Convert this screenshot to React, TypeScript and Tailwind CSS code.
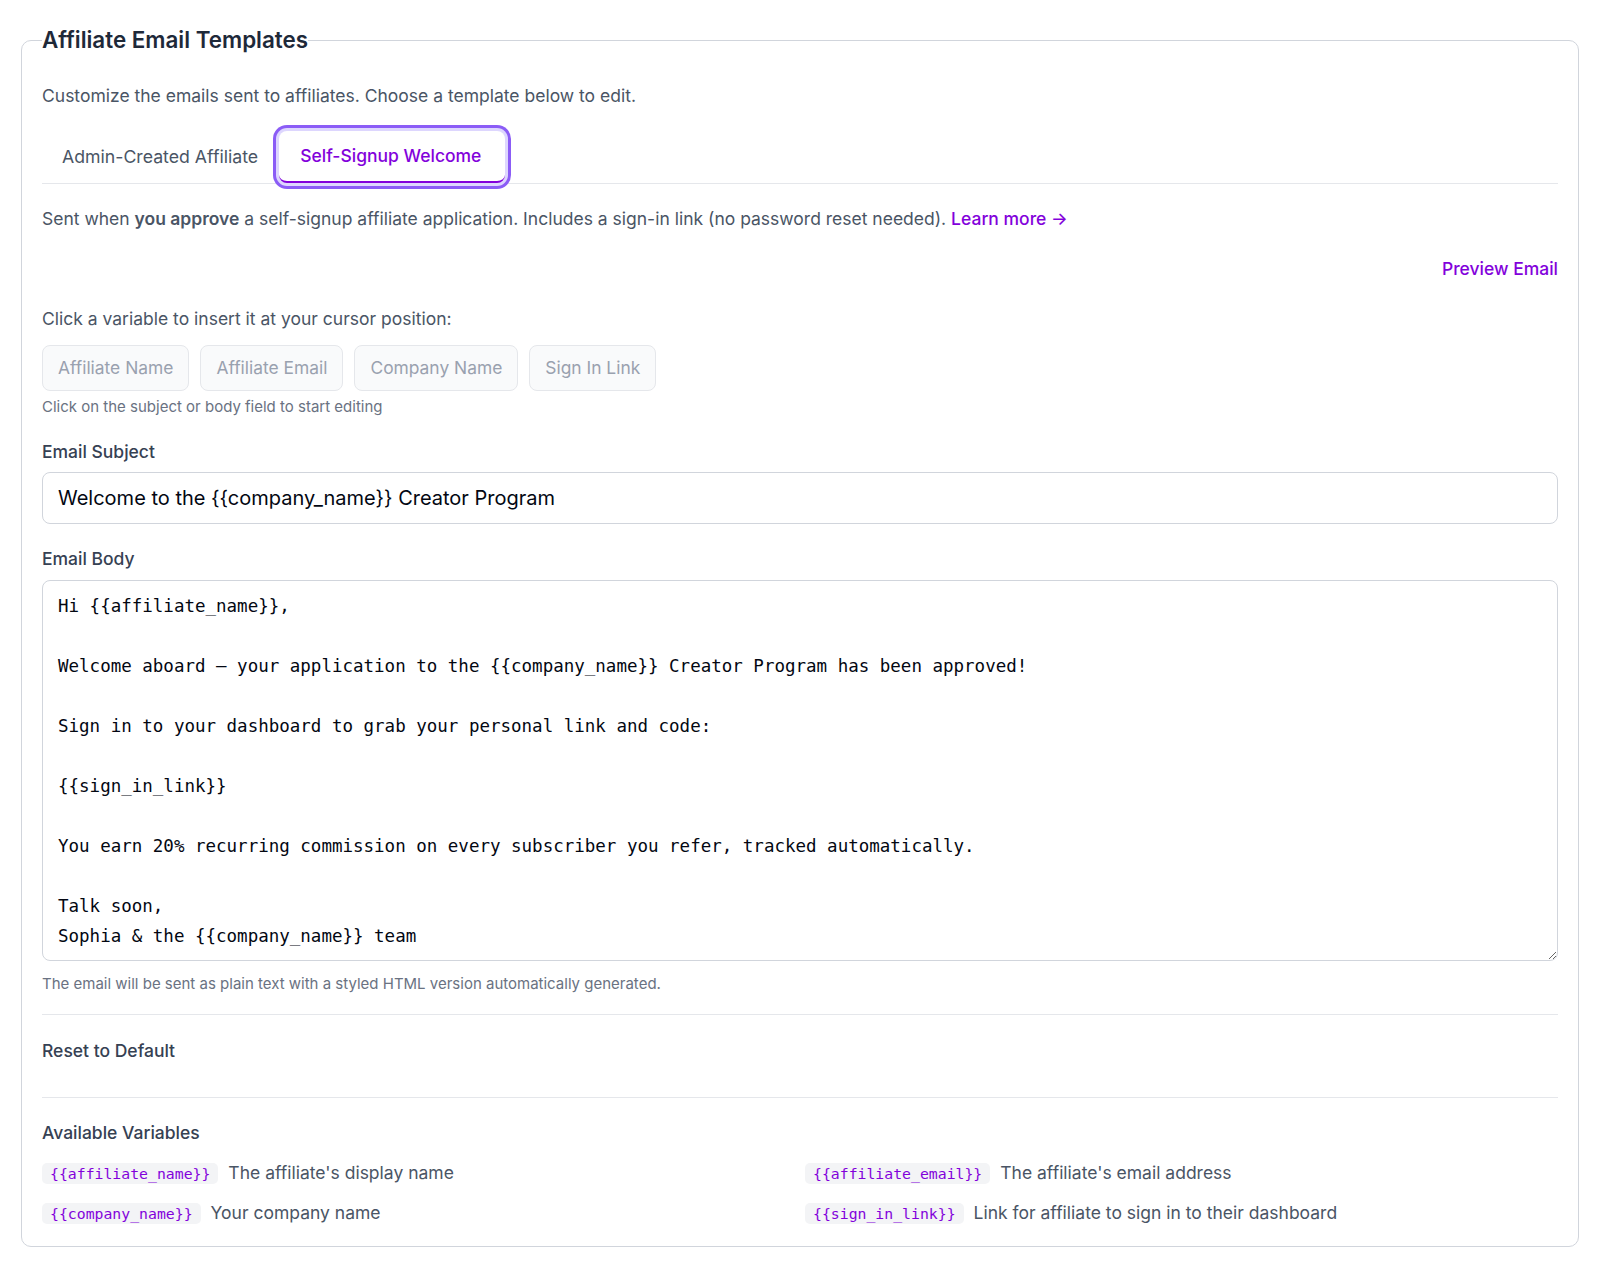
import React, { useState } from 'react';

const sans = { fontFamily: 'Inter, "Noto Sans", sans-serif' };
const mono = { fontFamily: '"DejaVu Sans Mono", "Liberation Mono", monospace' };

const bodyText = `Hi {{affiliate_name}},

Welcome aboard — your application to the {{company_name}} Creator Program has been approved!

Sign in to your dashboard to grab your personal link and code:

{{sign_in_link}}

You earn 20% recurring commission on every subscriber you refer, tracked automatically.

Talk soon,
Sophia & the {{company_name}} team`;

const insertButtons = ['Affiliate Name', 'Affiliate Email', 'Company Name', 'Sign In Link'];

const variables = [
  { code: '{{affiliate_name}}', desc: "The affiliate's display name" },
  { code: '{{affiliate_email}}', desc: "The affiliate's email address" },
  { code: '{{company_name}}', desc: 'Your company name' },
  { code: '{{sign_in_link}}', desc: 'Link for affiliate to sign in to their dashboard' },
];

export default function App() {
  const [tab, setTab] = useState<'admin' | 'self'>('self');
  const [subject, setSubject] = useState('Welcome to the {{company_name}} Creator Program');
  const [body, setBody] = useState(bodyText);

  return (
    <div className="min-h-screen bg-white px-[21px] pt-[25px] pb-[22px]" style={sans}>
      <fieldset className="rounded-[10px] border border-gray-300 px-[20px] pb-[20px]">
        <legend className="px-0 text-[22.4px] leading-[30px] font-semibold text-gray-800">
          Affiliate Email Templates
        </legend>

        <p className="mt-[28px] text-[17.5px] leading-[26px] text-gray-600">
          Customize the emails sent to affiliates. Choose a template below to edit.
        </p>

        {/* Tabs */}
        <div className="mt-[22px] flex border-b border-gray-200">
          <button
            onClick={() => setTab('admin')}
            className={
              tab === 'admin'
                ? 'h-[52px] rounded-lg border-b-2 border-purple-700 bg-white pl-[21px] pr-[24px] text-[17.5px] font-medium text-purple-700 shadow-[0_0_0_3px_#ddd6fe,0_0_0_6px_#8b5cf6]'
                : 'h-[52px] pl-[20px] pr-[21px] text-[17.7px] text-gray-600'
            }
          >
            Admin-Created Affiliate
          </button>
          <button
            onClick={() => setTab('self')}
            className={
              tab === 'self'
                ? 'relative h-[52px] rounded-lg border-b-2 border-purple-700 bg-white pl-[21px] pr-[24px] text-[17.5px] font-medium text-purple-700 shadow-[0_0_0_3px_#ddd6fe,0_0_0_6px_#8b5cf6]'
                : 'h-[52px] pl-[20px] pr-[21px] text-[17.7px] text-gray-600'
            }
          >
            Self-Signup Welcome
          </button>
        </div>

        <p className="mt-[22px] text-[17.5px] leading-[26px] text-gray-600">
          Sent when <span className="font-semibold">you approve</span> a self-signup affiliate application. Includes a
          sign-in link (no password reset needed).{' '}
          <a href="#" className="font-medium text-purple-700">
            Learn more →
          </a>
        </p>

        <div className="mt-[24px] flex justify-end">
          <button className="text-[17.5px] leading-[26px] font-medium text-purple-700">Preview Email</button>
        </div>

        <p className="mt-[24px] text-[17.5px] leading-[26px] text-gray-600">
          Click a variable to insert it at your cursor position:
        </p>
        <div className="mt-[13px] flex gap-[11px]">
          {insertButtons.map((b) => (
            <button
              key={b}
              disabled
              className="h-[46px] rounded-lg border border-gray-200 bg-gray-50 px-[15px] text-[17.4px] text-gray-400"
            >
              {b}
            </button>
          ))}
        </div>
        <p className="mt-[5px] text-[15px] leading-[22px] text-gray-500">
          Click on the subject or body field to start editing
        </p>

        <label className="mt-[21px] block text-[17.5px] leading-[26px] font-medium text-gray-700">Email Subject</label>
        <input
          value={subject}
          onChange={(e) => setSubject(e.target.value)}
          className="mt-[7px] block h-[52px] w-full rounded-lg border border-gray-300 px-[15px] text-[20px] text-gray-950 outline-none"
        />

        <label className="mt-[22px] block text-[17.5px] leading-[26px] font-medium text-gray-700">Email Body</label>
        <textarea
          value={body}
          onChange={(e) => setBody(e.target.value)}
          className="mt-[8px] block h-[381px] w-full rounded-lg border border-gray-300 px-[15px] pt-[10px] text-[17.5px] leading-[30px] text-gray-950 outline-none"
          style={mono}
        />
        <p className="mt-[12px] text-[15px] leading-[22px] text-gray-500">
          The email will be sent as plain text with a styled HTML version automatically generated.
        </p>

        <div className="mt-[19px] border-t border-gray-200" />
        <div className="pt-[23px] pb-[33px]">
          <button className="text-[17.5px] leading-[26px] font-medium text-gray-700">Reset to Default</button>
        </div>
        <div className="border-t border-gray-200" />

        <h3 className="mt-[22px] text-[17.5px] leading-[26px] font-medium text-gray-700">Available Variables</h3>
        <div className="mt-[14px] grid grid-cols-2 gap-x-[10px] gap-y-[14px]">
          {variables.map((v) => (
            <div key={v.code} className="flex h-[26px] items-center gap-[10px]">
              <code className="rounded-[5px] bg-gray-100 px-2 text-[14.8px] leading-[21px] text-purple-700" style={mono}>
                {v.code}
              </code>
              <span className="text-[17.5px] text-gray-600">{v.desc}</span>
            </div>
          ))}
        </div>
      </fieldset>
    </div>
  );
}
